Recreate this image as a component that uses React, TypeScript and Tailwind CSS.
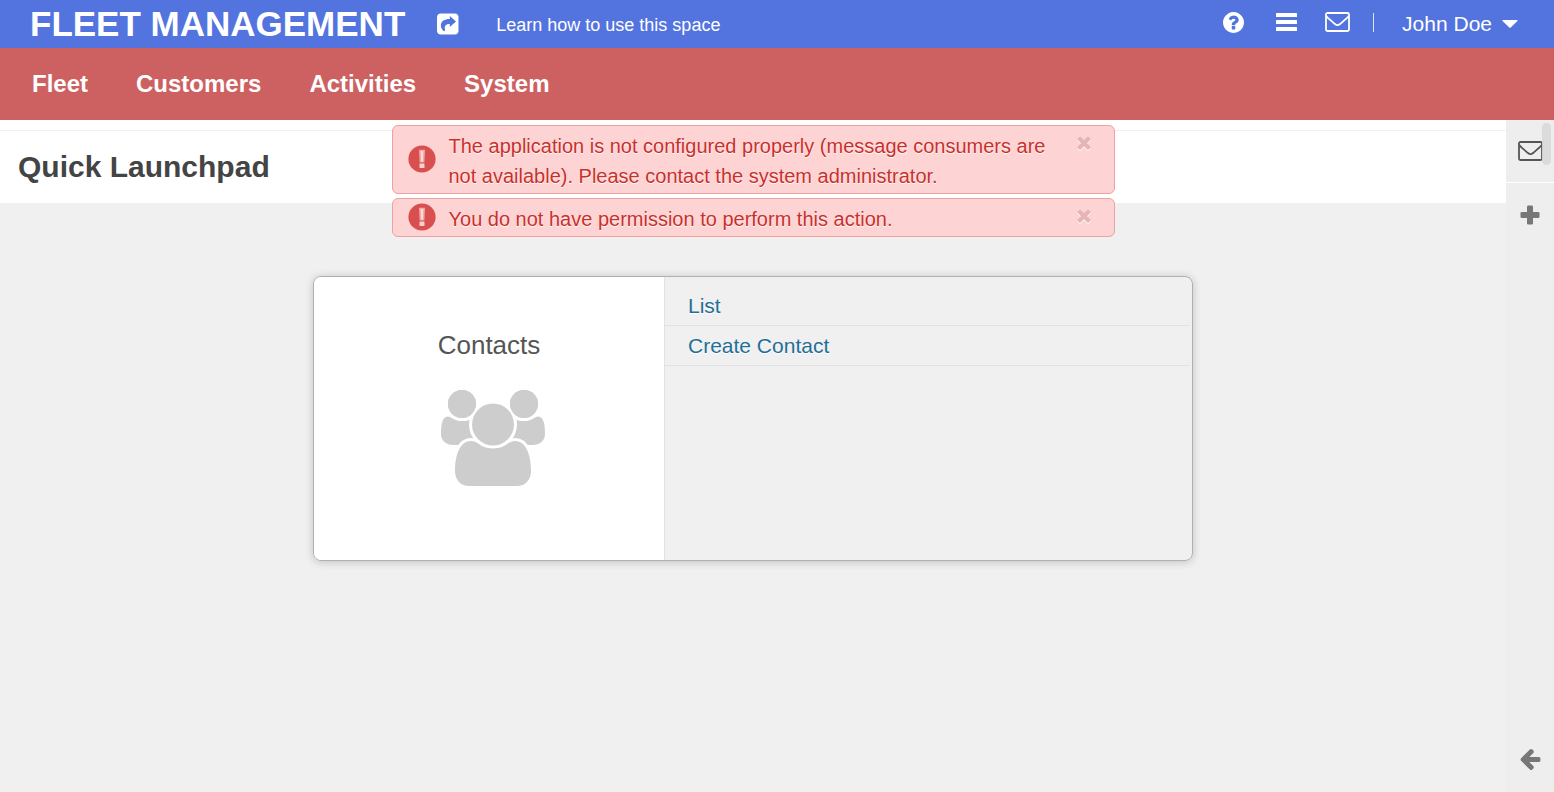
import React from "react";

type IconProps = { className?: string };

function ShareSquareIcon({ className }: IconProps) {
  return (
    <svg className={className} viewBox="0 0 22 22" aria-hidden="true">
      <rect x="0" y="0.5" width="21.5" height="21" rx="4" fill="#fff" />
      <path
        d="M12.8 3 L19 8.6 L12.8 14 V11 C9 11 7.6 12.6 7.8 15.4 C7.9 16.8 8.5 17.8 6.8 18.2 C5 16.8 3.9 14.8 3.9 12.6 C3.9 8 7.6 6 12.8 6 Z"
        fill="#5373df"
      />
    </svg>
  );
}

function HelpIcon({ className }: IconProps) {
  return (
    <svg className={className} viewBox="0 0 1536 1536" fill="currentColor" aria-hidden="true">
      <path d="M896 1248v-192q0-14-9-23t-23-9H672q-14 0-23 9t-9 23v192q0 14 9 23t23 9h192q14 0 23-9t9-23zm256-672q0-88-55.500-163T958 297t-170-41q-243 0-371 213-15 24 8 42l132 100q7 6 19 6 16 0 25-12 53-68 86-92 34-24 86-24 48 0 85.500 26t37.500 59q0 38-20 61t-68 45q-63 28-115.500 86.500T640 892v36q0 14 9 23t23 9h192q14 0 23-9t9-23q0-19 21.500-49.500T972 829q32-18 49-28.500t46-35 44.500-48 28-60.500 12.500-81zm384 192q0 209-103 385.500T1153.500 1433 768 1536t-385.500-103T103 1153.500 0 768t103-385.500T382.500 103 768 0t385.500 103T1433 382.500 1536 768z" />
    </svg>
  );
}

function BarsIcon({ className }: IconProps) {
  return (
    <svg className={className} viewBox="0 0 21 18" fill="currentColor" aria-hidden="true">
      <rect width="21" height="4" rx="0.500" />
      <rect y="7" width="21" height="4" rx="0.500" />
      <rect y="14" width="21" height="4" rx="0.500" />
    </svg>
  );
}

function EnvelopeIcon({ className }: IconProps) {
  return (
    <svg
      className={className}
      viewBox="0 0 25 20"
      fill="none"
      stroke="currentColor"
      strokeWidth="1.800"
      strokeLinejoin="round"
      aria-hidden="true"
    >
      <rect x="1" y="1" width="23" height="18" rx="1.500" />
      <path d="M1.300 4 C3.500 7 7.500 9.800 10 12 C11.500 13.400 13.500 13.400 15 12 C17.500 9.800 21.500 7 23.700 4" />
    </svg>
  );
}

function AlertIcon({ className }: IconProps) {
  return (
    <svg className={className} viewBox="0 0 28 28" aria-hidden="true">
      <circle cx="14" cy="14" r="13.600" fill="#d94f4f" />
      <path d="M11 4.800 H17 L16.400 17.400 H11.600 Z" fill="#f0a8a8" />
      <path d="M12.800 6 H15.200 L15 16.400 H13 Z" fill="#fcd9d9" />
      <rect x="11.500" y="18.400" width="5" height="4.600" rx="0.500" fill="#fad0d0" />
    </svg>
  );
}

function TimesIcon({ className }: IconProps) {
  return (
    <svg className={className} viewBox="300 300 1190 1260" fill="currentColor" aria-hidden="true">
      <path d="M1490 1322q0 40-28 68l-136 136q-28 28-68 28t-68-28l-294-294-294 294q-28 28-68 28t-68-28l-136-136q-28-28-28-68t28-68l294-294-294-294q-28-28-28-68t28-68l136-136q28-28 68-28t68 28l294 294 294-294q28-28 68-28t68 28l136 136q28 28 28 68t-28 68l-294 294 294 294q28 28 28 68z" />
    </svg>
  );
}

function PlusIcon({ className }: IconProps) {
  return (
    <svg className={className} viewBox="0 0 20 20" fill="currentColor" aria-hidden="true">
      <rect x="7" y="0.500" width="6" height="19" rx="1.300" />
      <rect x="0.500" y="7" width="19" height="6" rx="1.300" />
    </svg>
  );
}

function ArrowLeftIcon({ className }: IconProps) {
  return (
    <svg className={className} viewBox="192 181 1472 1558" fill="currentColor" aria-hidden="true">
      <path d="M1664 896v128q0 53-32.500 90.500T1547 1152H843l293 294q38 36 38 90t-38 90l-75 76q-37 37-90 37-52 0-91-37L229 1050q-37-37-37-90 0-52 37-91l651-650q38-38 91-38 52 0 90 38l75 74q38 38 38 91t-38 91L843 768h704q52 0 84.500 37.500T1664 896z" />
    </svg>
  );
}

function ContactsIcon({ className }: IconProps) {
  return (
    <svg className={className} viewBox="0 0 104 98" fill="#cdcdcd" aria-hidden="true">
      <path d="M7 27.500 C10 27.500 13 32 21 32 S28 30 34 29 L44 56 H13 C4 56 0 51 0 45 C0 36 1 27.500 7 27.500 Z" />
      <path d="M97 27.500 C94 27.500 91 32 83 32 S76 30 70 29 L60 56 H91 C100 56 104 51 104 45 C104 36 103 27.500 97 27.500 Z" />
      <g stroke="#fff" strokeWidth="6" paintOrder="stroke">
        <circle cx="21" cy="15" r="14" />
        <circle cx="83" cy="15" r="14" />
        <path d="M30 52 C37 52 40 59 52 59 S67 52 74 52 C86 52 90 68 90 82 C90 91 84 97 76 97 H28 C20 97 14 91 14 82 C14 68 18 52 30 52 Z" />
        <circle cx="52" cy="35.500" r="21" />
      </g>
      <circle cx="21" cy="15" r="14" />
      <circle cx="83" cy="15" r="14" />
    </svg>
  );
}

const menu = ["Fleet", "Customers", "Activities", "System"];
const messages = [
  "The application is not configured properly (message consumers are not available). Please contact the system administrator.",
  "You do not have permission to perform this action.",
];
const contactLinks = ["List", "Create Contact"];

function Notification({ text }: { text: string }) {
  return (
    <div
      role="alert"
      className="flex items-center rounded-md border border-[#f0a0a0] bg-[#fdd3d3] pr-[23px] pl-[15px] text-[#c9302c]"
    >
      <AlertIcon className="mb-0.5 size-7 shrink-0" />
      <p className="ml-[13px] flex-1 pt-[5px] pr-6 pb-0.5 text-[20px] leading-[30px] [text-shadow:0_1px_1px_#fff]">
        {text}
      </p>
      <button type="button" aria-label="Close" className="mt-[10px] self-start text-[#e6b5b5]">
        <TimesIcon className="size-[14px] drop-shadow-[0_1px_0_#fff]" />
      </button>
    </div>
  );
}

export default function App() {
  return (
    <div className="flex min-h-screen flex-col bg-[#f0f0f0] font-['Liberation_Sans',Arial,sans-serif]">
      <header className="flex h-12 items-center bg-[#5373df] pr-9 pl-[30px] text-white">
        <a href="#home" className="text-[35px] leading-[48px] font-bold whitespace-nowrap">
          FLEET MANAGEMENT
        </a>
        <a href="#learn" className="ml-8 flex items-center gap-[37px] text-[18px]">
          <ShareSquareIcon className="size-[22px]" />
          <span className="pt-0.5">Learn how to use this space</span>
        </a>
        <div className="ml-auto flex items-center pb-1">
          <button type="button" aria-label="Help">
            <HelpIcon className="size-[21px]" />
          </button>
          <button type="button" aria-label="Menu" className="ml-8">
            <BarsIcon className="h-[18px] w-[21px]" />
          </button>
          <button type="button" aria-label="Messages" className="ml-7">
            <EnvelopeIcon className="h-5 w-[25px]" />
          </button>
          <span className="ml-[23px] h-[19px] w-px bg-white/80" />
          <button type="button" className="ml-7 flex items-center gap-[10px] pt-1 text-[21px] leading-6">
            John Doe
            <svg className="h-2 w-4" viewBox="0 0 16 8" fill="currentColor" aria-hidden="true">
              <path d="M1 0 H15 Q16 0 15.500 1 L8.700 7.600 Q8 8.200 7.300 7.600 L0.500 1 Q0 0 1 0 Z" />
            </svg>
          </button>
        </div>
      </header>
      <nav className="flex h-[72px] items-center gap-12 bg-[#cd6161] px-8 text-[24px] font-bold text-white">
        {menu.map((item) => (
          <a key={item} href={`#${item.toLowerCase()}`}>
            {item}
          </a>
        ))}
      </nav>
      <div className="relative flex flex-1">
        <main className="flex-1">
          <div className="h-[83px] bg-white pt-[10px]">
            <h1 className="border-t border-[#f0f0f0] pl-[18px] text-[30px] leading-[72px] font-bold text-[#444]">
              Quick Launchpad
            </h1>
          </div>
          <section className="mx-auto mt-[73px] flex h-[285px] w-[880px] overflow-hidden rounded-lg border border-[#b0b0b0] shadow-[0_1px_8px_rgba(0,0,0,0.2)]">
            <div className="flex w-[351px] flex-col items-center border-r border-[#e2e2e2] bg-white pt-[52px]">
              <h2 className="text-[26px] leading-8 text-[#555]">Contacts</h2>
              <ContactsIcon className="mt-7 ml-2 h-[98px] w-[104px]" />
            </div>
            <ul className="mr-0.5 flex-1 pt-[9px] text-[21px] text-[#1f6f96]">
              {contactLinks.map((item) => (
                <li key={item} className="border-b border-[#e2e2e2] pl-[23px] leading-[39px]">
                  <a href={`#${item.toLowerCase().replace(" ", "-")}`} className="[text-shadow:0_1px_0_#fff]">
                    {item}
                  </a>
                </li>
              ))}
            </ul>
          </section>
        </main>
        <aside className="flex w-12 flex-col items-center bg-[#eee] text-[#777]">
          <button
            type="button"
            aria-label="Inbox"
            className="flex h-[63px] w-full items-center justify-center border-b border-white text-[#555]"
          >
            <EnvelopeIcon className="h-5 w-[25px]" />
          </button>
          <button type="button" aria-label="Add" className="mt-[22px]">
            <PlusIcon className="size-5" />
          </button>
          <button type="button" aria-label="Collapse" className="mt-auto mb-[22px]">
            <ArrowLeftIcon className="size-[21px]" />
          </button>
        </aside>
        <span className="absolute top-[3px] right-[3px] h-[42px] w-[9px] rounded-full bg-[#d8d8d8]/90" />
        <div className="absolute inset-x-0 top-[5px] mr-12 flex justify-center">
          <div className="flex w-[723px] flex-col gap-1">
            {messages.map((text) => (
              <Notification key={text} text={text} />
            ))}
          </div>
        </div>
      </div>
    </div>
  );
}
